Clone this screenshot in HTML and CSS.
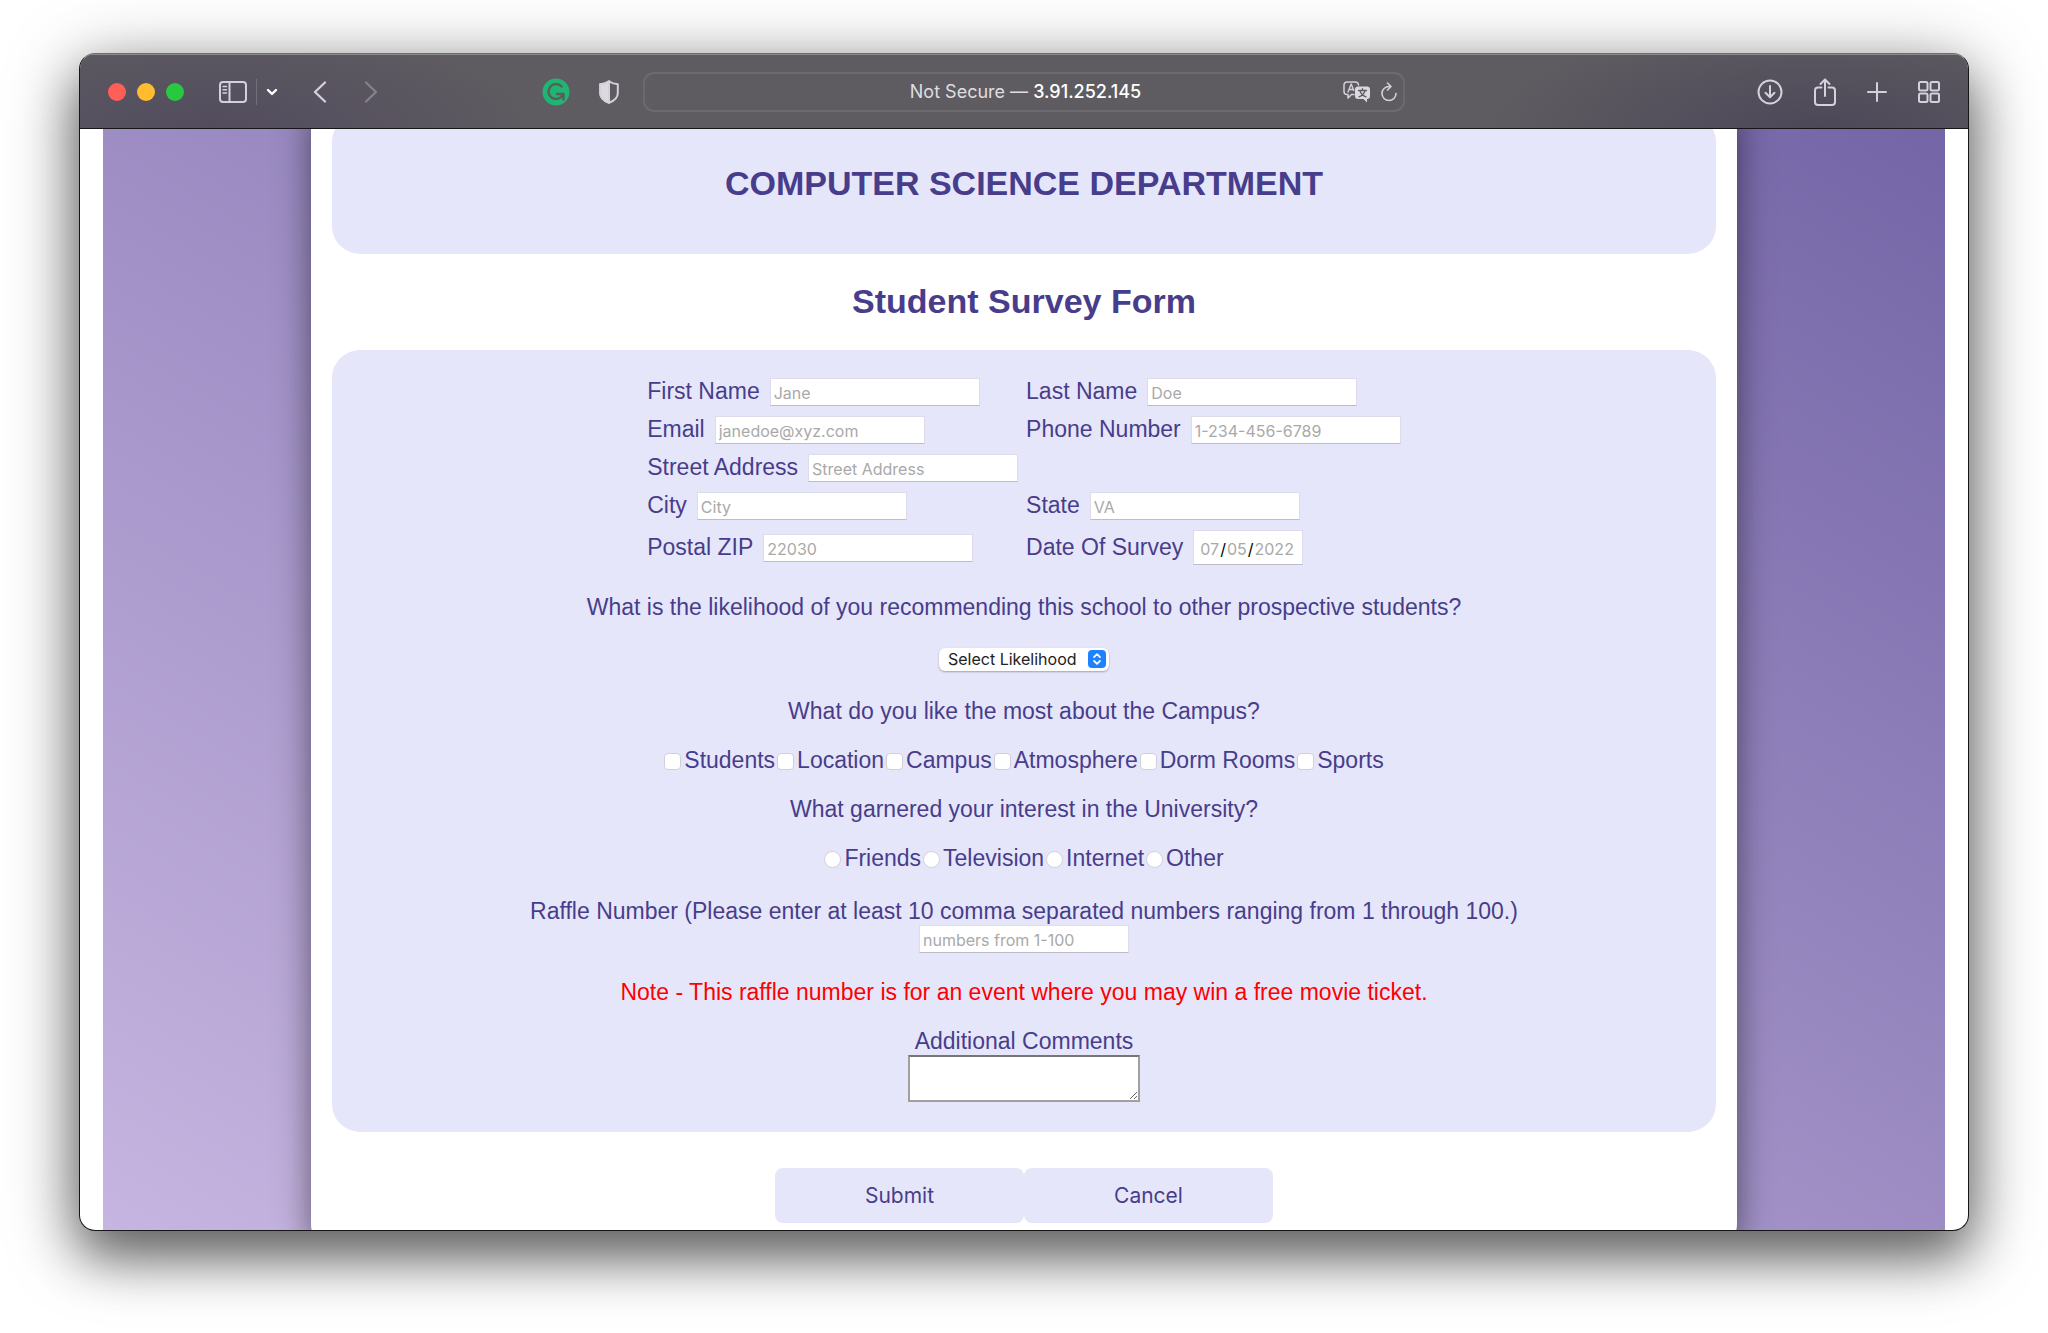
FILE: index.html
```html
<!DOCTYPE html>
<html lang="en-US">
<head>
<meta charset="utf-8">
<title>Student Survey Form</title>
<link rel="stylesheet" href="styles.css">
</head>
<body>
<div class="window">
  <header class="toolbar">
    <div class="tools tools-start">
      <div class="lights"><span class="light red"></span><span class="light yellow"></span><span class="light green"></span></div>
      <div class="sidebar-tools">
        <button class="tool" type="button" aria-label="Show sidebar"><svg width="28" height="22" viewBox="0 0 28 22"><rect x="1" y="1" width="26" height="20" rx="3"/><path d="M10.500 1v20" /><path d="M4 5.500h3.500M4 8.800h3.500M4 12h3.500" stroke-width="1.500"/></svg></button>
        <span class="divider"></span>
        <button class="tool bright" type="button" aria-label="Tab groups"><svg width="12" height="8" viewBox="0 0 12 8"><path d="M2 2l4 4 4-4" stroke-width="2.400"/></svg></button>
      </div>
      <div class="nav-tools">
        <button class="tool" type="button" aria-label="Back"><svg width="14" height="22" viewBox="0 0 14 22"><path d="M12 1.500L2 11l10 9.500" stroke-width="2.300"/></svg></button>
        <button class="tool dim" type="button" aria-label="Forward"><svg width="14" height="22" viewBox="0 0 14 22"><path d="M2 1.500L12 11 2 20.500" stroke-width="2.300"/></svg></button>
      </div>
      <div class="extensions">
        <button class="tool" type="button" aria-label="Grammar check"><svg width="28" height="28" viewBox="0 0 28 28"><circle cx="14" cy="14" r="13.500" fill="#21b573" stroke="none"/><path d="M19.500 8.500A7.500 7.500 0 1 0 20 18M15 16h6.500v5.500" stroke="#56605c" stroke-width="2.500"/></svg></button>
        <button class="tool" type="button" aria-label="Privacy report"><svg width="20" height="24" viewBox="0 0 20 24"><path d="M10 1.200C7.500 3 4.500 4 1.200 4.200V13c0 4.500 4 8 8.800 9.800 4.800-1.800 8.800-5.300 8.800-9.800V4.200C15.500 4 12.500 3 10 1.200z"/><path d="M10 1.200C7.500 3 4.500 4 1.200 4.200V13c0 4.500 4 8 8.800 9.800z" fill="#dcd9e0"/></svg></button>
      </div>
    </div>
    <div class="address">
      <span class="address-text">Not Secure — <strong>3.91.252.145</strong></span>
      <button class="tool" type="button" aria-label="Translate"><svg width="28" height="22" viewBox="0 0 28 22"><path d="M11 13.500H8.500L5 17v-3.500H4a3 3 0 0 1-3-3V4a3 3 0 0 1 3-3h8.500a3 3 0 0 1 3 3" stroke-width="1.500"/><path d="M5 11l3.200-8 2.600 6.500M6.200 8.500h4" stroke-width="1.400"/><path d="M15 5.500h9a3 3 0 0 1 3 3V15a3 3 0 0 1-3 3v3.500L20.500 18H15a3 3 0 0 1-3-3V8.500a3 3 0 0 1 3-3z" fill="#dcd9e0" stroke="none"/><path d="M15.500 9.500h8M19.500 7.700v1.800M22 9.800c-.8 2.700-3 5-6 6M17 9.800c.8 2.700 3 5 6 6" stroke="#5f5c61" stroke-width="1.300"/></svg></button>
      <button class="tool" type="button" aria-label="Reload"><svg width="18" height="20" viewBox="0 0 18 20"><path d="M10.500 4.500H9A7 7 0 1 0 16 11.500M7.500 1l3.500 3.500L7.500 8" stroke-width="1.600"/></svg></button>
    </div>
    <div class="tools tools-end">
      <button class="tool" type="button" aria-label="Downloads"><svg width="26" height="26" viewBox="0 0 26 26"><circle cx="13" cy="13" r="11.500"/><path d="M13 7v11M8.500 13.800L13 18.300l4.500-4.500"/></svg></button>
      <button class="tool" type="button" aria-label="Share"><svg width="22" height="28" viewBox="0 0 22 28"><path d="M7.500 9.500H4a3 3 0 0 0-3 3V24a3 3 0 0 0 3 3h14a3 3 0 0 0 3-3V12.500a3 3 0 0 0-3-3h-3.500M11 18V2M6.500 6L11 1.500 15.500 6"/></svg></button>
      <button class="tool" type="button" aria-label="New tab"><svg width="20" height="20" viewBox="0 0 20 20"><path d="M10 1v18M1 10h18"/></svg></button>
      <button class="tool" type="button" aria-label="Tab overview"><svg width="22" height="22" viewBox="0 0 22 22"><rect x="1" y="1" width="8.500" height="8.500" rx="1.500"/><rect x="12.500" y="1" width="8.500" height="8.500" rx="1.500"/><rect x="1" y="12.500" width="8.500" height="8.500" rx="1.500"/><rect x="12.500" y="12.500" width="8.500" height="8.500" rx="1.500"/></svg></button>
    </div>
  </header>
  <div class="viewport">
    <div class="backdrop">
      <main class="card">
        <div class="banner"><h1>COMPUTER SCIENCE DEPARTMENT</h1></div>
        <h2>Student Survey Form</h2>
        <form>
          <div class="panel">
            <div class="details">
              <div class="field"><label for="first">First Name</label><input class="text" id="first" type="text" placeholder="Jane"></div>
              <div class="field"><label for="last">Last Name</label><input class="text" id="last" type="text" placeholder="Doe"></div>
              <div class="field"><label for="email">Email</label><input class="text" id="email" type="email" placeholder="janedoe@xyz.com"></div>
              <div class="field"><label for="phone">Phone Number</label><input class="text" id="phone" type="tel" placeholder="1-234-456-6789"></div>
              <div class="field street"><label for="street">Street Address</label><input class="text" id="street" type="text" placeholder="Street Address"></div>
              <div class="field city"><label for="city">City</label><input class="text" id="city" type="text" placeholder="City"></div>
              <div class="field"><label for="state">State</label><input class="text" id="state" type="text" placeholder="VA"></div>
              <div class="field"><label for="zip">Postal ZIP</label><input class="text" id="zip" type="text" placeholder="22030"></div>
              <div class="field"><label for="date">Date Of Survey</label><input class="text date" id="date" type="date" value="2022-07-05"></div>
            </div>
            <label class="question" for="likelihood">What is the likelihood of you recommending this school to other prospective students?</label>
            <div class="picker">
              <select id="likelihood"><option>Select Likelihood</option></select>
              <svg class="picker-icon" width="18" height="18" viewBox="0 0 18 18" aria-hidden="true"><rect width="18" height="18" rx="4" fill="#1e82ff"/><path d="M6 7.200l3-3 3 3M6 10.800l3 3 3-3" fill="none" stroke="#fff" stroke-width="1.700" stroke-linecap="round" stroke-linejoin="round"/></svg>
            </div>
            <p class="question">What do you like the most about the Campus?</p>
            <div class="choices">
              <label><input type="checkbox">Students</label>
              <label><input type="checkbox">Location</label>
              <label><input type="checkbox">Campus</label>
              <label><input type="checkbox">Atmosphere</label>
              <label><input type="checkbox">Dorm Rooms</label>
              <label><input type="checkbox">Sports</label>
            </div>
            <p class="question">What garnered your interest in the University?</p>
            <div class="choices">
              <label><input type="radio" name="interest">Friends</label>
              <label><input type="radio" name="interest">Television</label>
              <label><input type="radio" name="interest">Internet</label>
              <label><input type="radio" name="interest">Other</label>
            </div>
            <div class="stack raffle">
              <label for="raffle">Raffle Number (Please enter at least 10 comma separated numbers ranging from 1 through 100.)</label>
              <input class="text" id="raffle" type="text" placeholder="numbers from 1-100">
            </div>
            <p class="note">Note - This raffle number is for an event where you may win a free movie ticket.</p>
            <div class="stack comments">
              <label for="comments">Additional Comments</label>
              <textarea id="comments"></textarea>
            </div>
          </div>
          <div class="actions"><button type="submit">Submit</button><button type="reset">Cancel</button></div>
        </form>
      </main>
    </div>
  </div>
</div>
</body>
</html>
```
FILE: styles.css
```css
* { box-sizing: border-box; }

body {
  margin: 0;
  padding: 53px 79px 104px;
  background: #fff;
  color: #483d8b;
  font: 23px/24px "Liberation Sans", Arial, sans-serif;
}

h1, h2, p { margin: 0; }
button, input, select, textarea { font-family: Inter, sans-serif; }

.window {
  border: 1px solid #161616;
  border-top-color: #6e6e6e;
  border-radius: 16px;
  overflow: hidden;
  background: #fff;
  box-shadow: 0 26px 50px rgba(0, 0, 0, .45), 0 14px 76px rgba(0, 0, 0, .4);
}

/* Browser toolbar */
.toolbar {
  display: grid;
  grid-template-columns: 1fr minmax(0, 762px) 1fr;
  align-items: center;
  height: 75px;
  border-top: 1px solid #8a8a8a;
  border-bottom: 1px solid #161616;
  background:
    radial-gradient(ellipse 340px 110px at 7% 100%, #524c5e, transparent),
    radial-gradient(ellipse 340px 110px at 92% 100%, #4c4859, transparent),
    #5f5c61;
}
.tools { display: flex; align-items: center; }
.tools-start { padding: 0 24px 0 28px; }
.tools-end { justify-content: flex-end; gap: 31px; padding-right: 28px; }
.tool {
  display: flex;
  padding: 0;
  border: 0;
  background: none;
  color: #d4d0dc;
}
.tool svg {
  fill: none;
  stroke: currentColor;
  stroke-width: 2;
  stroke-linecap: round;
  stroke-linejoin: round;
}
.bright { color: #fff; }
.dim { color: #858288; }
.lights { display: flex; gap: 11px; margin-right: 35px; }
.light { width: 18px; height: 18px; border-radius: 50%; }
.red { background: #ff5f57; }
.yellow { background: #febc2e; }
.green { background: #28c840; }
.sidebar-tools { display: flex; align-items: center; gap: 9px; margin-right: 35px; }
.divider { width: 1px; height: 26px; background: #737077; }
.nav-tools { display: flex; gap: 37px; }
.extensions { display: flex; align-items: center; gap: 29px; margin-left: auto; }
.address {
  display: flex;
  align-items: center;
  gap: 9px;
  height: 40px;
  padding: 0 5px 0 8px;
  border: 2px solid #6c696f;
  border-radius: 11px;
  color: #dfdde1;
  font: 18px/24px Inter, sans-serif;
}
.address-text { flex: 1; padding-left: 64px; text-align: center; }
.address strong { color: #fff; font-weight: 500; }

/* Page */
.viewport { padding: 0 23px; overflow: hidden; }
.backdrop {
  padding: 0 208px;
  overflow: hidden;
  background: linear-gradient(to top right, #c6b5e0, #7465a7);
}
.card {
  margin-bottom: -22px;
  padding: 0 21px 29px;
  border-radius: 0 0 28px 28px;
  background: #fff;
  box-shadow: 0 0 34px rgba(0, 0, 0, .5);
}
h1, h2 { font-size: 34px; line-height: 40px; text-align: center; }
.banner {
  margin-top: -15px;
  padding: 49px 0 51px;
  border-radius: 28px;
  background: #e6e6fa;
}
h2 { padding: 27px 0 29px; }
.panel {
  display: flex;
  flex-direction: column;
  align-items: center;
  padding: 28px 20px 30px;
  border-radius: 28px;
  background: #e6e6fa;
}
.details {
  display: grid;
  grid-template-columns: auto auto;
  gap: 10px 8px;
  margin-bottom: 30px;
}
.field { display: flex; align-items: center; gap: 10px; }
.field label { line-height: 26px; padding-bottom: 2px; }
.street, .city { grid-column: 1; }
.text {
  width: 210px;
  height: 28px;
  padding: 2px 3px 0;
  border: 1px solid #dddcec;
  border-bottom-color: #bdbcc8;
  border-radius: 0;
  outline: 0;
  background: #fff;
  font-size: 16px;
}
.text::placeholder { color: #a9a9a9; opacity: 1; }
.date { width: 110px; height: 35px; padding: 2px 5px 0; color: #a9a9a9; }
.date::-webkit-calendar-picker-indicator { display: none; }
.date::-webkit-datetime-edit-text { color: #000; padding: 0; }
.date::-webkit-datetime-edit-fields-wrapper { padding: 0; }

.question { margin-bottom: 25px; }
.picker { position: relative; margin: 4px 0 28px; }
.picker select {
  display: block;
  width: 170px;
  height: 23px;
  padding: 0 9px;
  border: 0;
  border-radius: 6px;
  appearance: none;
  background: #fff;
  box-shadow: 0 1px 2px rgba(0, 0, 0, .3);
  color: #222;
  font-size: 16px;
  line-height: 23px;
}
.picker-icon { position: absolute; top: 2px; right: 3px; pointer-events: none; }
.choices { display: flex; gap: 2px; margin-bottom: 25px; }
.choices label { display: flex; align-items: center; gap: 3px; }
.choices input {
  width: 17px;
  height: 17px;
  margin: 2px 0 0;
  border: 1px solid #d0cfda;
  border-radius: 4px;
  appearance: none;
  background: #fff;
}
.choices input[type="radio"] { border-radius: 50%; }
.stack { display: flex; flex-direction: column; align-items: center; gap: 2px; }
.raffle { margin: 4px 0 27px; }
.note { margin-bottom: 25px; color: #f00; }
textarea {
  width: 232px;
  height: 47px;
  border: 2px solid #a0a0a0;
  border-top-color: #767676;
  background: #fff;
}
.actions { display: flex; justify-content: center; padding-top: 36px; }
.actions button {
  width: 249px;
  height: 55px;
  border: 0;
  border-radius: 8px;
  background: #e6e6fa;
  color: #483d8b;
  font-size: 21px;
}
```
